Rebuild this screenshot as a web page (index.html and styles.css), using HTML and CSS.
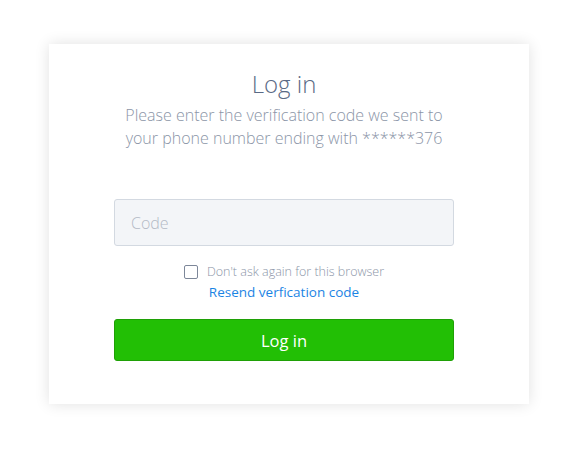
FILE: index.html
```html
<!DOCTYPE html>
<html lang="en">
<head>
  <meta charset="UTF-8">
  <meta name="viewport" content="width=device-width, initial-scale=1.0">
  <title>Log in</title>
  <link rel="stylesheet" href="styles.css">
</head>
<body>
  <div class="card">
    <h1>Log in</h1>
    <p class="subtitle">Please enter the verification code we sent to<br>your phone number ending with ******376</p>

    <form class="login-form">
      <input type="text" class="code-input" placeholder="Code">

      <div class="options">
        <label class="remember">
          <input type="checkbox">
          <span>Don't ask again for this browser</span>
        </label>
        <a href="#" class="resend">Resend verfication code</a>
      </div>

      <button type="submit">Log in</button>
    </form>
  </div>
</body>
</html>
```

FILE: styles.css
```css
body {
  font-family: "Open Sans", "Noto Sans", sans-serif;
  margin: 0;
  padding: 44px 0 20px 49px;
  background: #fff;
}
.card {
  width: 480px;
  height: 360px;
  box-sizing: border-box;
  padding: 25px 10px 0 0;
  background: #fff;
  box-shadow: 0 0 14px rgba(0, 0, 0, 0.12);
  text-align: center;
}
h1 {
  margin: 0;
  font-size: 24px;
  font-weight: 300;
  line-height: 30px;
  color: #5a6a85;
}
.subtitle {
  margin: 5px 0 0;
  font-size: 16px;
  font-weight: 300;
  line-height: 23px;
  color: #8b95a7;
}
.login-form {
  width: 340px;
  margin: 49px auto 0;
}
.code-input {
  display: block;
  width: 100%;
  height: 47px;
  box-sizing: border-box;
  padding: 0 16px;
  border: 1px solid #d3d9e1;
  border-radius: 3px;
  background: #f3f5f8;
  font-family: inherit;
  font-size: 16px;
  font-weight: 300;
  color: #333;
}
.code-input::placeholder {
  color: #b3bac6;
}
.options {
  margin-top: 18px;
  display: flex;
  flex-direction: column;
  align-items: center;
}
.remember {
  display: flex;
  align-items: center;
  font-size: 12.5px;
  font-weight: 300;
  color: #8b95a7;
  line-height: 16px;
}
.remember input {
  appearance: none;
  width: 14px;
  height: 14px;
  margin: 0 9px 0 0;
  border: 1px solid #7d8799;
  border-radius: 2px;
  background: #fff;
}
.resend {
  margin-top: 2px;
  font-size: 13.5px;
  line-height: 20px;
  color: #1b84e4;
  text-decoration: none;
}
button {
  display: block;
  width: 100%;
  height: 42px;
  margin-top: 17px;
  border: 1px solid #1fa006;
  border-radius: 3px;
  background: #22bf05;
  color: #fff;
  font-family: inherit;
  font-size: 16.5px;
  cursor: pointer;
}
```
